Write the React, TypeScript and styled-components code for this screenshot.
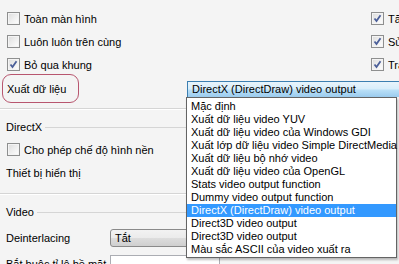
import React from 'react';
import styled, { createGlobalStyle } from 'styled-components';

const GlobalStyle = createGlobalStyle`
  html, body {
    margin: 0;
    padding: 0;
    background: #f4f4f4;
  }
  body {
    font-family: "Liberation Sans", Tahoma, sans-serif;
    font-size: 11px;
    color: #000;
  }
`;

const OUTPUTS = [
  'Mặc định',
  'Xuất dữ liệu video YUV',
  'Xuất dữ liệu video của Windows GDI',
  'Xuất lớp dữ liệu video Simple DirectMedia',
  'Xuất dữ liệu bộ nhớ video',
  'Xuất dữ liệu video của OpenGL',
  'Stats video output function',
  'Dummy video output function',
  'DirectX (DirectDraw) video output',
  'Direct3D video output',
  'Direct3D video output',
  'Màu sắc ASCII của video xuất ra',
];

const SELECTED = 8;

interface ICheckProps {
  checked?: boolean;
  label: string;
}

const Check: React.FC<ICheckProps> = ({ checked, label }) => (
  <CheckRow>
    <Box>
      {checked && (
        <svg width="9" height="9" viewBox="0 0 9 9">
          <path d="M1.5 4.5 L3.5 7 L7.5 1.2" fill="none" stroke="#4b5f99" strokeWidth="1.8" />
        </svg>
      )}
    </Box>
    <span>{label}</span>
  </CheckRow>
);

export default function App() {
  return (
    <>
      <GlobalStyle />
      <Page>
        <TopGrid>
          <Check label="Toàn màn hình" />
          <Check checked label="Tăng tốc" />
          <Check label="Luôn luôn trên cùng" />
          <Check checked label="Sử dụng" />
          <Check checked label="Bỏ qua khung" />
          <Check checked label="Trang trí" />
        </TopGrid>

        <OutputRow>
          <Marked>Xuất dữ liệu</Marked>
          <FocusSelect>DirectX (DirectDraw) video output</FocusSelect>
        </OutputRow>

        <Separator />

        <GroupTitle>DirectX</GroupTitle>
        <Section>
          <Check label="Cho phép chế độ hình nền" />
          <PlainRow>Thiết bị hiển thị</PlainRow>
        </Section>

        <Separator />

        <GroupTitle>Video</GroupTitle>
        <FieldRow>
          <FieldLabel>Deinterlacing</FieldLabel>
          <Combo>Tắt</Combo>
        </FieldRow>
        <FieldRow>
          <FieldLabel>Bắt buộc tỉ lệ bề mặt</FieldLabel>
          <TextInput />
        </FieldRow>

        <DropList>
          {OUTPUTS.map((o, i) => (
            <Option key={i} selected={i === SELECTED}>
              {o}
            </Option>
          ))}
        </DropList>
      </Page>
    </>
  );
}

const Page = styled.div`
  position: relative;
  width: 399px;
  height: 264px;
  overflow: hidden;
  background: #f4f4f4;
`;

const TopGrid = styled.div`
  display: grid;
  grid-template-columns: 364px 120px;
  grid-auto-rows: 23px;
  padding: 7px 0 0 7px;
`;

const CheckRow = styled.div`
  display: flex;
  align-items: center;
  gap: 4px;
  height: 23px;
  white-space: nowrap;
`;

const Box = styled.span`
  box-sizing: border-box;
  width: 13px;
  height: 13px;
  border: 1px solid #8e8f8f;
  background: linear-gradient(135deg, #dcdcdc 0%, #f2f2f2 60%, #ffffff 100%);
  box-shadow: inset 0 0 0 1px #f4f4f4;
  display: flex;
  align-items: center;
  justify-content: center;
`;

const OutputRow = styled.div`
  display: flex;
  align-items: flex-start;
  height: 34px;
  margin-top: -2px;
  padding-left: 2px;
`;

const Marked = styled.div`
  box-sizing: border-box;
  flex-shrink: 0;
  width: 77px;
  height: 29px;
  border: 1px solid #b8566f;
  border-radius: 9px;
  padding-left: 4px;
  display: flex;
  align-items: center;
  white-space: nowrap;
`;

const FocusSelect = styled.div`
  box-sizing: border-box;
  margin: 7px 0 0 108px;
  width: 230px;
  height: 16px;
  border: 1px solid #3c7fb1;
  border-bottom: none;
  padding-left: 4px;
  line-height: 15px;
  white-space: nowrap;
  flex-shrink: 0;
  background: linear-gradient(to bottom, #e8f4fc 0%, #d8eefb 45%, #b9dff7 55%, #9acbee 100%);
`;

const Separator = styled.div`
  width: 190px;
  height: 1px;
  background: #d5d5d5;
  border-bottom: 1px solid #ffffff;
`;

const GroupTitle = styled.div`
  display: flex;
  align-items: center;
  gap: 3px;
  height: 18px;
  margin-top: 8px;
  padding-left: 6px;
  width: 180px;

  &::after {
    content: '';
    flex: 1;
    height: 1px;
    background: #d5d5d5;
  }
`;

const Section = styled.div`
  padding: 2px 0 8px 7px;
`;

const PlainRow = styled.div`
  height: 24px;
  margin-left: -1px;
  display: flex;
  align-items: center;
`;

const FieldRow = styled.div`
  display: flex;
  align-items: flex-start;
  padding-left: 6px;
  margin-top: 8px;
  height: 18px;
  line-height: 18px;
  white-space: nowrap;
`;

const FieldLabel = styled.span`
  width: 104px;
  flex-shrink: 0;
`;

const Combo = styled.div`
  box-sizing: border-box;
  width: 110px;
  height: 18px;
  border: 1px solid #8a8a8a;
  border-radius: 3px;
  padding-left: 4px;
  line-height: 16px;
  background: linear-gradient(to bottom, #f2f2f2 0%, #ebebeb 50%, #dddddd 50%, #cfcfcf 100%);
`;

const TextInput = styled.div`
  box-sizing: border-box;
  width: 110px;
  height: 18px;
  border: 1px solid #abadb3;
  background: #fff;
`;

const DropList = styled.div`
  position: absolute;
  left: 186px;
  top: 97px;
  width: 211px;
  box-sizing: border-box;
  border: 1px solid #646464;
  background: #fff;
  padding: 2px 0 1px;
  box-shadow: 1px 2px 2px rgba(0, 0, 0, 0.25);
`;

const Option = styled.div<{ selected?: boolean }>`
  height: 13px;
  line-height: 13px;
  padding-left: 4px;
  white-space: nowrap;
  color: ${(p) => (p.selected ? '#fff' : '#000')};
  background: ${(p) => (p.selected ? '#3399ff' : 'transparent')};
`;
